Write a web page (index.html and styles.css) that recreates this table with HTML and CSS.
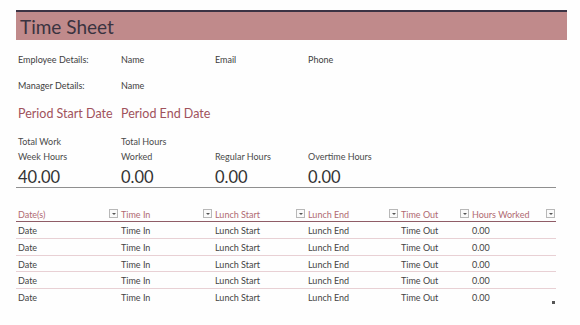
FILE: index.html
```html
<!DOCTYPE html>
<html>
<head>
<meta charset="utf-8">
<link rel="stylesheet" href="styles.css">
</head>
<body>
<div class="page">
  <div class="titlebar"><span class="title">Time Sheet</span></div>

  <div class="grid row-emp">
    <div>Employee Details:</div><div>Name</div><div>Email</div><div>Phone</div>
  </div>
  <div class="grid row-mgr">
    <div>Manager Details:</div><div>Name</div>
  </div>
  <div class="grid row-period">
    <div>Period Start Date</div><div>Period End Date</div>
  </div>
  <div class="grid row-labels">
    <div>Total Work<br>Week Hours</div><div>Total Hours<br>Worked</div><div>Regular Hours</div><div>Overtime Hours</div>
  </div>
  <div class="grid row-values">
    <div>40.00</div><div>0.00</div><div>0.00</div><div>0.00</div>
  </div>

  <div class="table">
    <div class="thead">
      <div class="th">Date(s)<span class="dd"></span></div>
      <div class="th">Time In<span class="dd"></span></div>
      <div class="th">Lunch Start<span class="dd"></span></div>
      <div class="th">Lunch End<span class="dd"></span></div>
      <div class="th">Time Out<span class="dd"></span></div>
      <div class="th">Hours Worked<span class="dd"></span></div>
    </div>
    <div class="tr"><div>Date</div><div>Time In</div><div>Lunch Start</div><div>Lunch End</div><div>Time Out</div><div>0.00</div></div>
    <div class="tr"><div>Date</div><div>Time In</div><div>Lunch Start</div><div>Lunch End</div><div>Time Out</div><div>0.00</div></div>
    <div class="tr"><div>Date</div><div>Time In</div><div>Lunch Start</div><div>Lunch End</div><div>Time Out</div><div>0.00</div></div>
    <div class="tr"><div>Date</div><div>Time In</div><div>Lunch Start</div><div>Lunch End</div><div>Time Out</div><div>0.00</div></div>
    <div class="tr last"><div>Date</div><div>Time In</div><div>Lunch Start</div><div>Lunch End</div><div>Time Out</div><div>0.00</div></div>
  </div>
  <span class="dot"></span>
</div>
</body>
</html>
```
FILE: styles.css
```css
html, body { margin: 0; padding: 0; background: #fefefe; }
body { font-family: Lato, "Open Sans", sans-serif; color: #3a3a3a; }
.page { position: relative; width: 580px; height: 325px; padding: 10px 0 0 16px; box-sizing: border-box; }

.titlebar {
  width: 551px; height: 28px;
  border-top: 2px solid #3b3344;
  background: #c08a8b;
  display: flex; align-items: center;
  box-sizing: content-box;
}
.title { font-size: 19px; color: #3a3340; padding-left: 4px; line-height: 1; }

.grid { display: grid; grid-template-columns: 103px 94px 93px 93px; font-size: 9px; color: #404040; }
.grid > div { padding-left: 2px; }
.row-emp { margin-top: 14px; height: 12px; line-height: 12px; }
.row-mgr { margin-top: 14px; height: 12px; line-height: 12px; }
.row-period { margin-top: 14px; height: 16px; line-height: 16px; font-size: 12.5px; color: #a0525c; }
.row-labels { margin-top: 12px; line-height: 15px; align-items: end; font-size: 9px; color: #4a4a4a; }
.row-values {
  width: 540px; height: 22px; line-height: 24px;
  font-size: 16.5px; color: #333;
  border-bottom: 1.5px solid #8f8f8f;
  margin-top: 1px;
}

.table { width: 540px; margin-top: 20px; font-size: 9px; }
.thead, .tr { display: grid; grid-template-columns: 103px 94px 93px 93px 71px 86px; }
.thead { height: 13px; border-bottom: 1.5px solid #8f5c66; color: #b06a72; line-height: 13px; }
.th { position: relative; padding-left: 2px; }
.dd {
  position: absolute; right: 1px; top: 1px;
  width: 9px; height: 9px; box-sizing: border-box;
  border: 1px solid #b8b8b8; background: #fafafa;
}
.dd::after {
  content: ""; position: absolute; left: 2px; top: 3px;
  border-left: 2px solid transparent; border-right: 2px solid transparent;
  border-top: 2px solid #555;
}
.tr {
  height: 16.8px; box-sizing: border-box; padding-top: 3px; line-height: 12px;
  border-bottom: 1.5px solid #e8d0d4; color: #444;
}
.tr.last { border-bottom-color: transparent; }
.tr > div { padding-left: 2px; }

.dot { position: absolute; left: 552px; top: 301px; width: 3px; height: 3px; background: #555; }
```
